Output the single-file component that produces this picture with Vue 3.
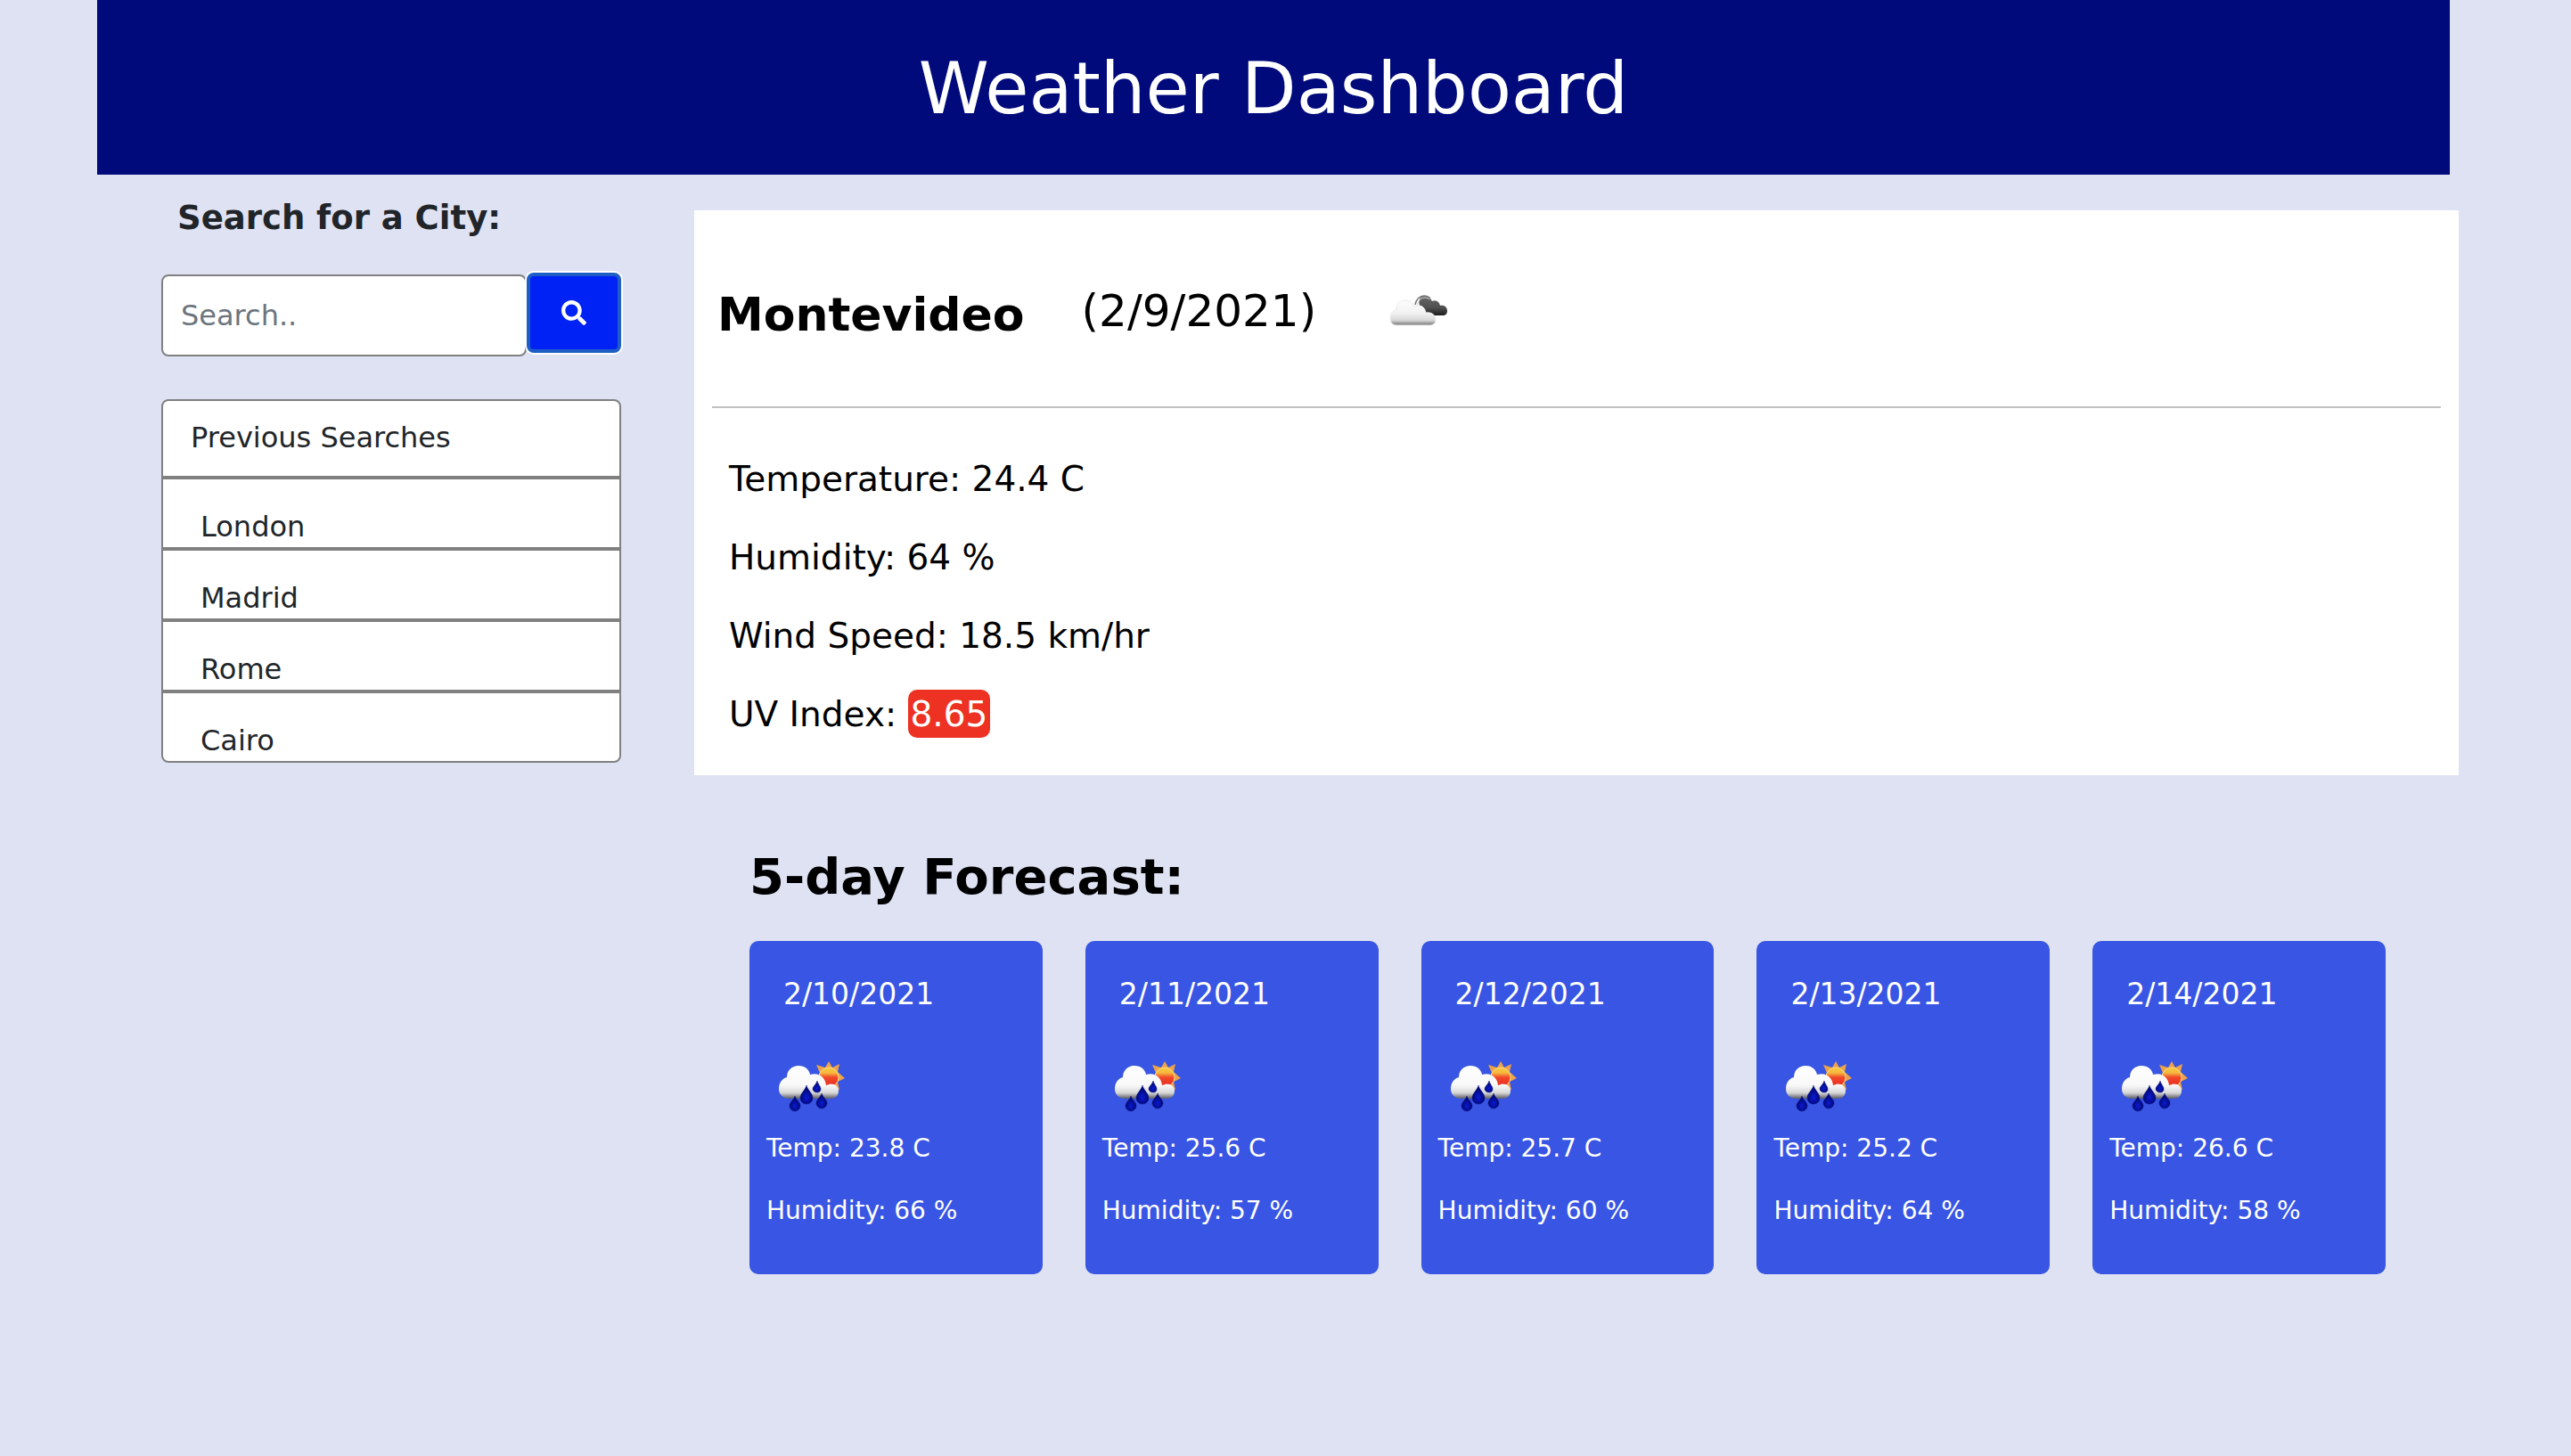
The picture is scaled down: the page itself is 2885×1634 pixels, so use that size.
<script setup>
import { ref } from 'vue'

const query = ref('')
const cities = ['London', 'Madrid', 'Rome', 'Cairo']
const forecast = [
  { date: '2/10/2021', temp: '23.8', humidity: 66 },
  { date: '2/11/2021', temp: '25.6', humidity: 57 },
  { date: '2/12/2021', temp: '25.7', humidity: 60 },
  { date: '2/13/2021', temp: '25.2', humidity: 64 },
  { date: '2/14/2021', temp: '26.6', humidity: 58 },
]
</script>

<template>
  <div class="page">
    <header class="banner">
      <h1>Weather Dashboard</h1>
    </header>
    <div class="layout">
      <aside class="sidebar">
        <label class="search-label" for="city">Search for a City:</label>
        <form class="search" @submit.prevent>
          <input id="city" v-model="query" type="text" placeholder="Search.." />
          <button type="submit" aria-label="Search">
            <svg viewBox="0 0 512 512" aria-hidden="true">
              <path fill="#fff" d="M505 442.7L405.3 343c-4.5-4.5-10.6-7-17-7H372c27.6-35.3 44-79.7 44-128C416 93.1 322.9 0 208 0S0 93.1 0 208s93.1 208 208 208c48.3 0 92.7-16.4 128-44v16.3c0 6.4 2.5 12.5 7 17l99.7 99.7c9.4 9.4 24.6 9.4 33.9 0l28.3-28.3c9.4-9.4 9.4-24.6.1-34zM208 336c-70.7 0-128-57.2-128-128 0-70.7 57.2-128 128-128 70.7 0 128 57.2 128 128 0 70.7-57.2 128-128 128z" />
            </svg>
          </button>
        </form>
        <ul class="history">
          <li class="history-title">Previous Searches</li>
          <li v-for="city in cities" :key="city">{{ city }}</li>
        </ul>
      </aside>

      <main class="content">
        <section class="current">
          <div class="current-head">
            <h2>Montevideo</h2>
            <span class="today">(2/9/2021)</span>
            <svg class="cloud-icon" viewBox="0 6 100 64" aria-hidden="true">
              <defs>
                <linearGradient id="cloudDark" x1="0" y1="0" x2="0" y2="1">
                  <stop offset="0" stop-color="#666" />
                  <stop offset=".6" stop-color="#505050" />
                  <stop offset="1" stop-color="#1c1c1c" />
                </linearGradient>
                <linearGradient id="cloudLight" x1="0" y1="0" x2="0" y2="1">
                  <stop offset="0" stop-color="#fdfdfd" />
                  <stop offset=".5" stop-color="#f3f3f3" />
                  <stop offset=".8" stop-color="#d8d8d8" />
                  <stop offset="1" stop-color="#757575" />
                </linearGradient>
              </defs>
              <path fill="url(#cloudDark)" d="M52 33C50 26 53 22 58 22C61 22 64 24 66 28C70 26 74 28 75 33C80 32 83 35 83 39C83 42 81 44 78 44H61Z" />
              <path fill="none" stroke="#777" stroke-width="1.500" d="M47 32C48 26 52 22 57 22C60 22 62 23 64 25" />
              <path fill="none" stroke="#ddd" stroke-width="1" d="M49 33C50 28 53 24 58 24C60 24 62 25 63 26" />
              <path fill="url(#cloudLight)" stroke="#ececec" stroke-width="1" d="M26 55C21 55 19 51 19 47C19 42 22 38 26 38C25 32 29 27 36 27C41 27 45 30 46 34C52 31 58 34 59 41C65 40 70 43 70 49C70 53 67 55 63 55Z" />
            </svg>
          </div>
          <hr />
          <div class="readings">
            <p>Temperature: 24.4 C</p>
            <p>Humidity: 64 %</p>
            <p>Wind Speed: 18.5 km/hr</p>
            <p>UV Index: <span class="uv">8.65</span></p>
          </div>
        </section>

        <section class="forecast">
          <h2>5-day Forecast:</h2>
          <div class="days">
            <article v-for="(day, i) in forecast" :key="day.date" class="day">
              <h3>{{ day.date }}</h3>
              <svg class="rain-icon" viewBox="0 0 100 80" aria-hidden="true">
                <defs>
                  <linearGradient :id="'sun' + i" x1="0" y1="0" x2="0" y2="1">
                    <stop offset="0" stop-color="#f8c83c" />
                    <stop offset=".28" stop-color="#f6b83e" />
                    <stop offset=".5" stop-color="#f0492a" />
                    <stop offset="1" stop-color="#e8281e" />
                  </linearGradient>
                  <linearGradient :id="'rain' + i" x1="0" y1="0" x2="0" y2="1">
                    <stop offset="0" stop-color="#fff" />
                    <stop offset=".6" stop-color="#f8f8f8" />
                    <stop offset=".82" stop-color="#d8d8d8" />
                    <stop offset="1" stop-color="#5c5c66" />
                  </linearGradient>
                  <radialGradient :id="'drop' + i" cx=".5" cy=".65" r=".5">
                    <stop offset="0" stop-color="#0a1ad6" />
                    <stop offset="1" stop-color="#02066e" />
                  </radialGradient>
                </defs>
                <path fill="#eba24a" d="M70 11L74 18L82 14L80 23L88 30L80 34L82 43L72 40L58 32L60 24L56 15L66 18Z" />
                <circle cx="70" cy="29" r="11" :fill="`url(#sun${i})`" stroke="#f9dc8c" stroke-width="1" />
                <path :fill="`url(#rain${i})`" d="M26 53C18 53 14 48 14 42C14 35 18 30 23 29C23 21 29 16 36 16C43 16 48 20 49 26C58 23 66 28 67 38C74 34 81 38 81 44C81 50 77 53 72 53Z" />
                <g :fill="`url(#drop${i})`" stroke="#0a1480" stroke-width=".5">
                  <path d="M45 38C46 43 52 47 52 52C52 56 49 59 45 59C41 59 38 56 38 52C38 47 44 43 45 38Z" />
                  <path d="M57 33C58 37 61 39 61 42C61 45 59 46 57 46C54 46 52 44 52 42C52 39 56 37 57 33Z" />
                  <path d="M62 47C63 51 68 54 68 58C68 61 65 64 62 64C59 64 56 61 56 58C56 54 61 51 62 47Z" />
                  <path d="M32 50C33 54 38 57 38 61C38 64 35 67 32 67C29 67 26 64 26 61C26 57 31 54 32 50Z" />
                </g>
              </svg>
              <p>Temp: {{ day.temp }} C</p>
              <p>Humidity: {{ day.humidity }} %</p>
            </article>
          </div>
        </section>
      </main>
    </div>
  </div>
</template>

<style>
body {
  margin: 0;
  background: #dee2f3;
}
</style>

<style scoped>
.page {
  font-family: Verdana, 'DejaVu Sans', sans-serif;
  font-size: 32px;
  color: #212529;
}
.page * {
  box-sizing: border-box;
}
h1, h2, h3, p, ul {
  margin: 0;
  padding: 0;
}
.banner {
  margin: 0 136px 0 109px;
  padding: 40px 0 36px;
  background: #000a7b;
  color: #fff;
  text-align: center;
}
.banner h1 {
  font-size: 80px;
  font-weight: 400;
  line-height: 120px;
}
.layout {
  display: grid;
  grid-template-columns: 516px minmax(0, 1fr);
  column-gap: 82px;
  padding: 0 126px 0 181px;
}
.sidebar {
  padding-top: 20px;
}
.search-label {
  display: block;
  padding-left: 18px;
  font-size: 37px;
  font-weight: 700;
  line-height: 58px;
}
.search {
  display: flex;
  align-items: flex-start;
  margin-top: 34px;
}
.search input {
  flex: 1;
  min-width: 0;
  height: 92px;
  padding: 0 20px;
  border: 2px solid #808080;
  border-radius: 8px;
  background: #fff;
  color: #212529;
  font: inherit;
}
.search input::placeholder {
  color: #6c757d;
  opacity: 1;
}
.search button {
  display: flex;
  align-items: center;
  justify-content: center;
  width: 106px;
  height: 90px;
  margin-top: -2px;
  padding: 0;
  border: 4px solid #1f5fc5;
  border-radius: 8px;
  background: #0022f5;
  box-shadow: 0 0 0 2px #fff;
}
.search button svg {
  width: 28px;
  height: 28px;
}
.history {
  margin-top: 48px;
  list-style: none;
}
.history li {
  padding: 30px 42px 0;
  border: 2px solid #808080;
  background: #fff;
  line-height: 46px;
}
.history .history-title {
  padding: 18px 31px 20px;
  border-radius: 8px 8px 0 0;
}
.history li:last-child {
  border-radius: 0 0 8px 8px;
}
.content {
  padding-top: 40px;
  color: #000;
}
.current {
  padding: 0 20px 44px;
  background: #fff;
}
.current-head {
  display: flex;
  align-items: flex-start;
  gap: 64px;
  height: 220px;
  padding: 80px 6px 0;
}
.current-head h2 {
  font-size: 52px;
  line-height: 74px;
}
.today {
  font-size: 50px;
  line-height: 66px;
}
.cloud-icon {
  width: 100px;
  height: 64px;
}
hr {
  height: 2px;
  margin: 0;
  border: 0;
  background: #c0c0c0;
}
.readings {
  display: flex;
  flex-direction: column;
  gap: 40px;
  padding: 56px 19px 0;
  font-size: 39px;
  line-height: 48px;
}
.uv {
  padding: 5px 3px 4px;
  border-radius: 10px;
  background: #ed3224;
  color: #fff;
}
.forecast {
  padding: 78px 82px 0 62px;
}
.forecast h2 {
  font-size: 56px;
  line-height: 72px;
}
.days {
  display: grid;
  grid-template-columns: repeat(5, minmax(0, 1fr));
  gap: 48px;
  margin-top: 36px;
}
.day {
  padding: 36px 19px 50px;
  border-radius: 10px;
  background: #3855e3;
  color: #fff;
}
.day h3 {
  padding-left: 19px;
  font-size: 33px;
  font-weight: 400;
  line-height: 48px;
}
.rain-icon {
  display: block;
  width: 100px;
  height: 80px;
  margin: 40px 0 8px;
}
.day p {
  font-size: 28px;
  line-height: 42px;
}
.day p + p {
  margin-top: 28px;
}
</style>
